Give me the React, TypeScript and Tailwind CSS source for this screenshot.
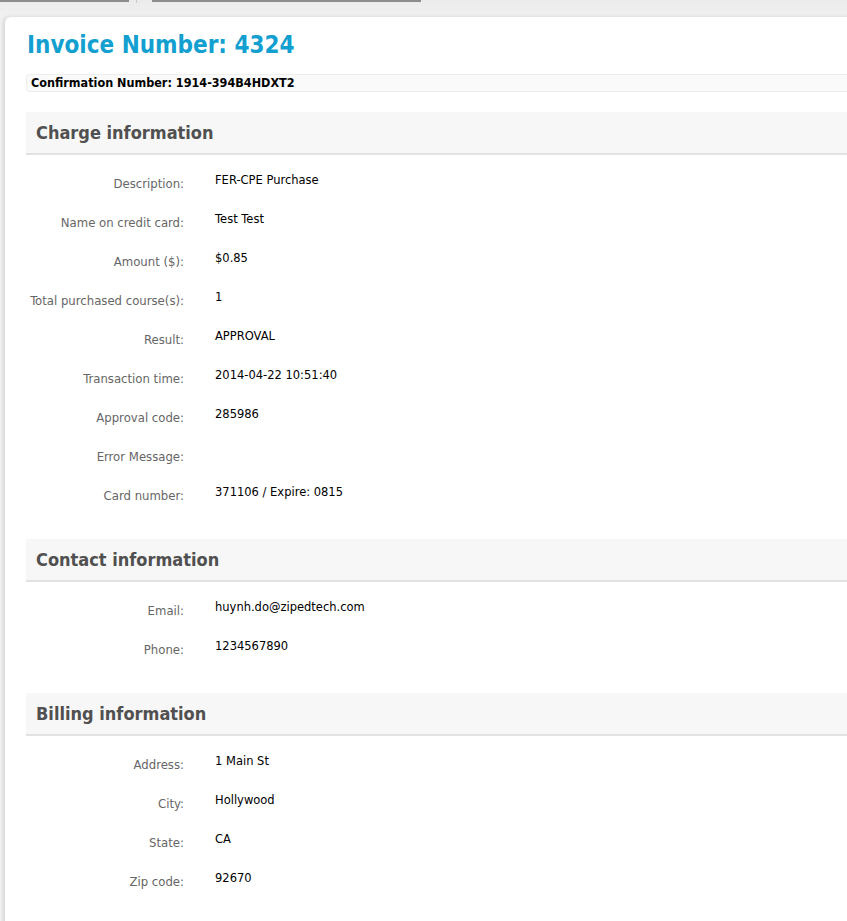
const font = { fontFamily: '"DejaVu Sans", Verdana, sans-serif' };
const condensed = { fontFamily: '"DejaVu Sans Condensed", "DejaVu Sans", sans-serif' };

type Row = [string, string];

const sections: { title: string; rows: Row[] }[] = [
  {
    title: "Charge information",
    rows: [
      ["Description:", "FER-CPE Purchase"],
      ["Name on credit card:", "Test Test"],
      ["Amount ($):", "$0.85"],
      ["Total purchased course(s):", "1"],
      ["Result:", "APPROVAL"],
      ["Transaction time:", "2014-04-22 10:51:40"],
      ["Approval code:", "285986"],
      ["Error Message:", ""],
      ["Card number:", "371106 / Expire: 0815"],
    ],
  },
  {
    title: "Contact information",
    rows: [
      ["Email:", "huynh.do@zipedtech.com"],
      ["Phone:", "1234567890"],
    ],
  },
  {
    title: "Billing information",
    rows: [
      ["Address:", "1 Main St"],
      ["City:", "Hollywood"],
      ["State:", "CA"],
      ["Zip code:", "92670"],
    ],
  },
];

function Section({ title, rows }: { title: string; rows: Row[] }) {
  return (
    <div className="mt-[17px] first-of-type:mt-5">
      <div className="h-[43px] bg-[#f7f7f7] border-b-2 border-[#e2e2e2] pl-[10px] flex items-center">
        <h2 className="text-[18px] font-bold text-[#505050]" style={condensed}>{title}</h2>
      </div>
      <div className="pt-[16px]">
        {rows.map(([label, value]) => (
          <div key={label} className="flex h-[39px]">
            <div className="w-[158px] shrink-0 whitespace-nowrap text-right text-[13px] leading-[18px] text-[#666] pt-[4px]" style={condensed}>
              {label}
            </div>
            <div className="pl-[31px] text-[11.5px] leading-[18px] text-black whitespace-nowrap">{value}</div>
          </div>
        ))}
      </div>
    </div>
  );
}

export default function App() {
  return (
    <div className="min-h-[921px] bg-gradient-to-b from-[#ebebeb] to-[#f2f2f2] to-[20px] overflow-hidden" style={font}>
      {/* tab strip remnants */}
      <div className="flex h-[17px] items-start">
        <div className="w-[129px] h-[2px] bg-[#8c8c8c]" />
        <div className="ml-[7px] w-px h-[3px] bg-[#c9c9c9]" />
        <div className="ml-[15px] w-[269px] h-[2px] bg-[#8c8c8c]" />
      </div>
      <div className="ml-[5px] mr-[-20px] bg-white rounded-tl-[6px] shadow-[-2px_0_4px_rgba(0,0,0,0.12)] pl-[21px] pt-[12px] pb-[20px]">
        <h1 className="text-[24px] font-bold text-[#139fd0] leading-[32px] pl-[1px]" style={condensed}>
          Invoice Number: 4324
        </h1>
        <div className="mt-[13px] mb-[2px] h-[18px] bg-[#fafafa] border border-[#eeeeee] rounded-[3px] pl-[4px] flex items-center">
          <span className="text-[12.5px] font-bold text-black" style={condensed}>
            Confirmation Number: 1914-394B4HDXT2
          </span>
        </div>
        <div>
          {sections.map((s) => (
            <Section key={s.title} title={s.title} rows={s.rows} />
          ))}
        </div>
      </div>
    </div>
  );
}
